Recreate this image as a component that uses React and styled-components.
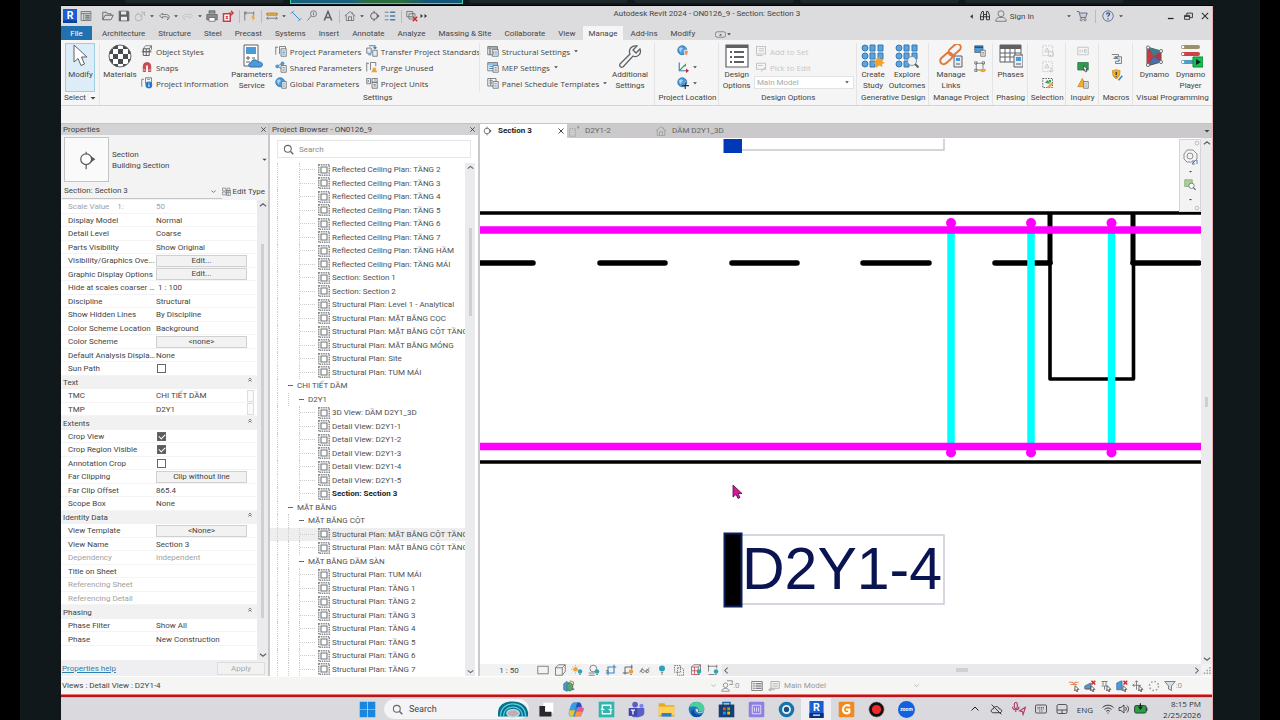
import React from 'react';
import styled, { createGlobalStyle, css } from 'styled-components';

const GlobalStyle = createGlobalStyle`
  * { box-sizing: border-box; }
  body {
    margin: 0;
    background: #000;
    color: #444;
    font-family: Roboto, 'Open Sans', 'Noto Sans', sans-serif;
    font-size: 8px;
    line-height: 11px;
  }
  button, input, select {
    font: inherit;
    color: inherit;
    margin: 0;
    padding: 0;
    border: 0;
    background: none;
    border-radius: 0;
  }
`;

/* ---------- frame ---------- */

const Desktop = styled.div`
  display: flex;
  flex-direction: column;
  min-height: 100vh;
  margin: 0 20px;
  padding: 0 47px 0 41px;
  background: #11181b;
`;

const MeetingStrip = styled.div`
  display: flex;
  gap: 6px;
  height: 6px;
  padding: 0 89px 0 64px;
  border-bottom: 1px solid #000;
`;

const MeetingTile = styled.div`
  flex: 1;
  height: 4px;
  margin-top: -1px;
  border-radius: 0 0 3px 3px;
  background: #1d2629;
  ${({ $active }) => $active && css`
    flex: 0 0 173px;
    height: 5px;
    border: 1px solid #35d99a;
    border-radius: 0;
    background: linear-gradient(90deg, #17607c 0 35%, #2c6d3e 45% 65%, #14557a 80%);
  `}
`;

const Window = styled.div`
  display: flex;
  flex-direction: column;
  flex: 1;
  background: #f4f4f4;
  border-right: 1px solid #e9b4b4;
`;

const Svg = styled.svg`
  display: block;
  flex: none;
  width: ${({ $size }) => $size}px;
  height: ${({ $size }) => $size}px;
  fill: none;
  stroke: ${({ $color }) => $color || '#5d6165'};
`;

/* ---------- icon drawings, 16 x 16 ---------- */

const globe = (
  <>
    <circle cx="7" cy="7" r="6" fill="#4b9bd8" stroke="#2c6fae" />
    <path d="M3 4l3-1 2 2-2 2-1 3-2-3zM9 7l3-1v3l-2 2z" fill="#a9d4f2" stroke="none" />
  </>
);
const plug = <path d="M9.500 7.500l5 5h-2.500l1 2.500-1.500.5-1-2.500-1.500 1.500z" fill="#fff" stroke="#333" />;
const bulb = (x, y, c = '#2ba3b8') => (
  <>
    <circle cx={x} cy={y} r="3" fill={c} stroke="none" />
    <path d={`M${x - 1} ${y + 4}h2`} stroke="#555" />
  </>
);
const redX = <path d="M10 1l5 5M15 1l-5 5" stroke="#d3232e" strokeWidth="2" />;

const art = {
  revit: (
    <>
      <path d="M0 0h16v16H0z" fill="#1a5fd0" stroke="none" />
      <path d="M0 13h16v3H0z" fill="#0b3f9c" stroke="none" />
      <text x="8" y="11.500" textAnchor="middle" fontSize="12" fontWeight="700" fill="#fff" stroke="none">R</text>
    </>
  ),
  home: <><path d="M1.500 2h13v12h-13zM1.500 4.500h13M5 5v9" /><path d="M7 7h6M7 9.500h6M7 12h6" strokeWidth="1.500" /></>,
  open: <path d="M1 13V3h5l1 2h5v2M1 13l3-6h11l-3 6z" strokeWidth="1.200" />,
  save: <><path d="M1.500 1.500h12l1 1v12h-13z" fill="#5d6165" /><path d="M4 2h7v4H4zM4 9h8v5H4z" fill="#ececec" stroke="none" /></>,
  sync: <g stroke="#aaacae"><circle cx="6" cy="10" r="4.500" /><path d="M9 3h5v5M14 3l-6 6M3 6l3-3" /></g>,
  undo: <path d="M6 4L2 8l4 3V9h5c3 0 3 3 1 4 4-1 4-7-1-7H6z" />,
  redo: <path d="M10 4l4 4-4 3V9H5c-3 0-3 3-1 4-4-1-4-7 1-7h5z" stroke="#bfc1c3" />,
  print: <><path d="M4 5V1h8v4M4 13H1V6h14v7h-3" fill="#8a8d90" /><path d="M4 10h8v5H4z" fill="#fff" /></>,
  pdf: <><path d="M2 5h9v10H2z" fill="#fff" stroke="#c83b45" strokeWidth="2" /><path d="M9 4h5M12 1l3 3-3 3M5 8l3 4M8 8l-3 4" stroke="#c83b45" strokeWidth="1.500" /></>,
  dims: <><path d="M1 2v12M13 2v5M1 4h12M3 2L1 4l2 2" /><path d="M11 7h3l-1 3h2l-4 5 1-4h-2z" fill="#f0a42c" stroke="none" /></>,
  measure: <><path d="M1 4h14v3H1z" fill="#e8b14c" stroke="#a87b26" /><path d="M1 11h14M3 9l-2 2 2 2M13 9l2 2-2 2" /></>,
  aligned: <path d="M3 3l10 10M1 5l4-4M11 15l4-4" stroke="#4287be" strokeWidth="1.300" />,
  tag: <><circle cx="10" cy="5" r="4" /><path d="M2 14l5-6M10 3v4" /></>,
  text: <path d="M3 14L8 2l5 12M5 10h6" strokeWidth="2" />,
  house: <><path d="M1 8l7-6 7 6M3 7v7h10V7" /><path d="M6 14V9h4v5M11 3v3" /></>,
  section: <><circle cx="8" cy="8" r="4.500" strokeWidth="1.300" /><path d="M8 1v3M8 12v3" strokeWidth="1.300" /><path d="M11 4l4.500 4-4.500 4c2-2 2-6 0-8z" fill="#5d6165" stroke="none" /></>,
  thin: <><path d="M1 3h5M1 8h5M1 13h5" /><path d="M8 3h7M8 8h7M8 13h7" strokeWidth="2.200" stroke="#4f7fae" /></>,
  closeViews: <><path d="M1 2h8v7H1zM4 5h8v7H4z" /><path d="M9 9l6 6M15 9l-6 6" stroke="#d3232e" strokeWidth="1.800" /></>,
  more: <path d="M1 4l5 4-5 4zM9 4l5 4-5 4z" fill="#333" stroke="none" />,
  caret: <path d="M3 6h10l-5 5z" fill="#444" stroke="none" />,
  caretLeft: <path d="M11 3v10L5 8z" fill="#333" stroke="none" />,
  binoculars: <path d="M2 13V7l2-5h2v11zM14 13V7l-2-5h-2v11zM6 6h4v3H6zM2 9h4M10 9h4" strokeWidth="1.300" stroke="#333" />,
  user: <><circle cx="8" cy="5" r="4" /><path d="M1 15c0-4 3-5 5-5h4c2 0 5 1 5 5z" /></>,
  cart: <><path d="M1 2h3l2 8h7l2-6H5" fill="#c9ccd4" stroke="#4a5470" /><circle cx="7" cy="13" r="1.500" /><circle cx="12" cy="13" r="1.500" /></>,
  help: <><circle cx="8" cy="8" r="7" stroke="#40537a" /><path d="M6 6c0-3 5-3 4 0-.5 1-2 1.500-2 3M8 11v1.500" stroke="#2350a8" strokeWidth="1.700" /></>,
  min: <path d="M3 12h9" stroke="#222" strokeWidth="2" />,
  restore: <path d="M1 6h9v7H1zM5 6V2h10v8h-5M1 8h9" stroke="#222" strokeWidth="1.500" />,
  close: <path d="M3 3l10 10M13 3L3 13" stroke="#333" strokeWidth="1.800" />,
  pill: <><rect x="0.500" y="4" width="15" height="8" rx="3" /><path d="M6 9.500h4L8 7z" fill="#444" stroke="none" /></>,
  objectStyles: <><path d="M3 5l3-4h8v5l-3 3H3z" /><path d="M3 5h8v9H3zM7 5v9M1 9h13M11 5l3-4" strokeWidth="1.300" /></>,
  snaps: <><path d="M3 14V7a5 5 0 0110 0v7h-3V7a2 2 0 00-4 0v7z" fill="#d84a55" stroke="#b3323d" /><path d="M3 12h3M10 12h3" stroke="#fff" /></>,
  projectInfo: <><path d="M1 3v10M1 3h3M6 1h8v8M6 1v8M8 3h4" /><circle cx="10.500" cy="10.500" r="4.500" fill="#2775c4" stroke="none" /><path d="M10.500 10v3M10.500 7.500v1" stroke="#fff" strokeWidth="1.500" /></>,
  projectParams: <><path d="M1 2v11M1 3h3M6 2h8v3M6 2v10" /><path d="M8 5h7v10H8z" fill="#e9edf1" /><path d="M10 8h3M10 10h3M10 12h3" stroke="#3a84c4" /></>,
  sharedParams: <><path d="M3 7l7-4M3 7l7 4" /><circle cx="3" cy="7" r="2.500" fill="#4b9bd8" stroke="none" /><circle cx="10" cy="3" r="2.500" fill="#4b9bd8" stroke="none" /><path d="M8 6h7v9H8z" fill="#e9edf1" /><path d="M10 9h3M10 12h3" /></>,
  globalParams: <>{globe}<path d="M9 6h6v9H9z" fill="#e9edf1" /><path d="M11 9h2M11 12h2" /></>,
  transfer: <><path d="M1 4h6v7H1zM9 7h6v8H9z" fill="#e9edf1" /><path d="M4 1h8v4M10 3l2 2 2-2M3 13h4" stroke="#3a84c4" strokeWidth="1.500" /></>,
  purge: <><path d="M1 2v12M1 3h3M6 2h7v5M6 2v10" /><path d="M9 9h4v2l2 4H7l2-4z" fill="#eda13a" stroke="none" /></>,
  units: <><path d="M1 2h5v7H1zM8 2h7v5H8zM8 7h7v8H8z" fill="#e9edf1" /><path d="M10 10h3M10 12h3M3 4v3M11 4h2" /></>,
  structural: <><path d="M1 2h13v11H1z" /><path d="M1 4h13M4 5v8" strokeWidth="1.500" /><path d="M7 6h8v9H7z" fill="#e9edf1" /><path d="M9 8v5M12 8v5" stroke="#3a84c4" /></>,
  mep: <><path d="M1 2h13v11H1z" /><path d="M1 4h13M3 7h5M3 10h5" stroke="#3a84c4" strokeWidth="1.500" /><path d="M8 6h7v9H8z" fill="#e9edf1" /><path d="M10 9h3M10 12h3" /></>,
  panelSchedule: <><path d="M1 2h11v10H1zM3 5h5M3 8h4M5 2v10" /><path d="M8 6h7v9H8z" fill="#e9edf1" /><path d="M10 9h3M10 12h3" stroke="#3a84c4" /></>,
  location: <>{globe}<path d="M12 7c4 0 4 3 0 8-3-5-3-8 0-8z" fill="#ec8f62" stroke="#fff" /></>,
  coords: <><path d="M3 2v11h10" stroke="#3b7cbf" strokeWidth="1.500" /><path d="M4 12l6-6" stroke="#3aa457" strokeWidth="1.500" /><path d="M12 10l4 3-4 3z" fill="#d3232e" stroke="none" /><path d="M12 3v4H8z" fill="#3aa457" stroke="none" /></>,
  position: <>{globe}<path d="M11 7v9M7 11.500h9" stroke="#333" strokeWidth="1.600" /></>,
  addSet: <g stroke="#c3c5c7"><path d="M2 2h12v10H2zM5 5h7M5 8h7M2 14h8" strokeWidth="1.400" /></g>,
  pickEdit: <g stroke="#c3c5c7"><path d="M2 3h12v8H2zM4 6h6M8 14l6-6" strokeWidth="1.400" /></g>,
  projectA: <><path d="M1 1h11v9H1z" fill="#4b9bd8" /><path d="M1 3h11" stroke="#24527d" strokeWidth="2" /><path d="M9 7h6v8H9z" fill="#e9edf1" /><path d="M11 10h2M11 12h2" /></>,
  decal: <><path d="M3 3h9v9H3zM1 1h3v3H1zM11 1h3v3h-3zM1 11h3v3H1z" /><path d="M8 11a4 3 0 107-1l-3 2z" fill="#eda13a" stroke="none" /></>,
  selSave: <g stroke="#bcbec0"><path d="M1 1h13v13H1z" strokeDasharray="2 1.500" /><path d="M4 9l3-5 2 5zM9 9h6v6H9z" /></g>,
  selLoad: <g stroke="#bcbec0"><path d="M1 1h13v13H1z" strokeDasharray="2 1.500" /><path d="M4 9l3-5 2 5zM12 8v6M9 12l3 3 3-3" /></g>,
  selEdit: <><path d="M1 2h13v12H1z" strokeDasharray="2 1.500" stroke="#333" /><path d="M4 8l3-4 4 5zM9 4h3v3H9z" fill="#34a15a" stroke="none" /><path d="M8 14l6-6" stroke="#eda13a" strokeWidth="3" /></>,
  ids: <g stroke="#c3c5c7"><path d="M1 3h14v10H1zM4 6v4M7 6v4M10 6h2v4h-2z" strokeWidth="1.300" /></g>,
  idSelect: <><path d="M1 2h14v10H1z" fill="#2f9b52" stroke="#23763e" /><path d="M9 6l5 5h-2l1 3-2 .5-1-3-1 1z" fill="#fff" stroke="#333" /></>,
  warnings: <><path d="M7 2l6 11H1z" fill="#efb02e" stroke="#c48a14" /><path d="M9 6h6v9H9z" fill="#e9edf1" /><path d="M11 9h2M11 12h2" /></>,
  macro: <><path d="M1 2h9v3H5l5 2H4M3 7h7" /><path d="M8 5h6v9H6v-3h5" fill="#e9edf1" /><path d="M9 8h3M9 10h3" stroke="#3a84c4" /></>,
  macroSec: <><path d="M2 2c3 0 4-1 5-1s2 1 5 1c0 6-1 9-5 11C3 11 2 8 2 2z" fill="#f0ae2a" stroke="#c48a14" /><path d="M7 4v4M7 9.500V11" stroke="#333" strokeWidth="1.600" /><path d="M10 15l5-6" stroke="#3a84c4" strokeWidth="2" /></>,
  editType: <><path d="M1 2h6v5H1zM9 2h5v5H9zM1 9h6v5H1z" /><path d="M8 6h7v9H8zM8 10h7M11 6v9" /></>,
  search: <><circle cx="7" cy="7" r="5" stroke="#666" strokeWidth="1.500" /><path d="M11 11l4 4" stroke="#666" strokeWidth="2" /></>,
  chevUp: <path d="M3 10l5-4 5 4" strokeWidth="1.800" />,
  chevDown: <path d="M3 6l5 4 5-4" strokeWidth="1.800" />,
  chevLeft: <path d="M10 3L5 8l5 5" strokeWidth="1.800" />,
  chevRight: <path d="M6 3l5 5-5 5" strokeWidth="1.800" />,
  collapse: <path d="M4 7l4-4 4 4M4 12l4-4 4 4" stroke="#333" strokeWidth="1.800" />,
  sheet: <><path d="M1 1h14v14H1z" strokeWidth="2" stroke="#8a8d90" strokeDasharray="2 1" /><path d="M4 4h8v8H4z" stroke="#6d7073" fill="#fff" strokeWidth="1.400" /></>,
  detailView: <><path d="M2 5h8v10H2z" strokeDasharray="2 1" stroke="#999" /><path d="M12 3h3M13.500 1v4" stroke="#888" /></>,
  box: <path d="M1 3h14v10H1z" />,
  cube: <path d="M2 5h9v10H2zM2 5l4-4h9v9l-4 5M11 5l4-4" />,
  sun: <><circle cx="6" cy="7" r="3" fill="#eda13a" stroke="none" /><path d="M6 1v2M6 11v2M0 7h2M2 3l1 1M10 3L9 4M2 11l1-1" stroke="#eda13a" />{bulb(12, 10)}</>,
  shadow: <><circle cx="7" cy="6" r="4.500" /><path d="M1 12h8M1 15h8" />{bulb(12, 10)}</>,
  cropA: <><path d="M4 15V4h11M1 12h11V1" stroke="#3a84c4" strokeWidth="1.500" /><path d="M1 9h3v3" /></>,
  cropB: <><path d="M4 14V4h10M1 12h8M13 1v6" strokeWidth="1.300" />{bulb(12, 10, '#eda13a')}</>,
  glasses: <path d="M1 11l4-6M9 11l5-6M3 9a2 2 0 104 1 2 2 0 00-4-1M9 9a2 2 0 104 1 2 2 0 00-4-1" />,
  reveal: <><circle cx="8" cy="6" r="4" fill="#2ba3b8" stroke="none" /><path d="M6.500 11.500h3M7 13.500h2" stroke="#555" /></>,
  tempProps: <><path d="M2 2h8v9H2z" strokeDasharray="2 1" /><path d="M6 5h6l2 2v8H6z" strokeDasharray="2 1" /></>,
  analytic: <><path d="M2 4l3-3h9v9M11 4l3-3" /><path d="M2 4h9v10H2zM2 9h9M6 4v10" stroke="#b44a4a" />{bulb(12, 10)}</>,
  constraint: <><path d="M2 1v9M1 3h12M13 1v5M2 14h8" />{bulb(12, 10)}</>,
  worksets: <><path d="M1 5l4-3 4 3v8l-4 2-4-2z" fill="#4b9bd8" stroke="#2c6fae" /><path d="M5 6l4-3 4 3v6l-4 3-4-3z" fill="#5da271" stroke="#3d7c4d" /><path d="M9 1l5 2v4" stroke="#d98a2b" strokeWidth="1.500" /><path d="M11 13l4-1" stroke="#3a84c4" strokeWidth="2" /></>,
  people: <g stroke="#777"><circle cx="6" cy="7" r="3" /><path d="M1 15c0-5 10-5 10 0zM8 1h7v5h-4" /></g>,
  list: <><path d="M1 2h14v12H1z" /><path d="M3 5h2M6 5h8M3 8h2M6 8h8M3 11h2M6 11h8" strokeWidth="1.400" /></>,
  listDim: <g stroke="#999"><path d="M4 2h11v9H4z" /><path d="M6 5h7M6 8h7M1 13h8M4 11l-3 2 3 2" /></g>,
  selLinks: <><path d="M1 3h5l2 2 2-2h4M3 6h9" stroke="#e28a54" strokeWidth="1.500" />{plug}</>,
  selUnderlay: <><path d="M1 8l8-4v8H1zM3 12h6" fill="#4b9bd8" />{redX}{plug}</>,
  selPinned: <><path d="M2 2h8M4 2v5M8 2v5M2 8h8M6 8v5" />{plug}</>,
  selFace: <><path d="M1 4l7-3v12H1z" fill="#4b9bd8" stroke="#2c6fae" />{redX}{plug}</>,
  dragSel: <><path d="M6 1v12M1 7h11M4 3l2-2 2 2M3 5L1 7l2 2" />{plug}</>,
  busy: <circle cx="8" cy="8" r="6" strokeDasharray="2 2.700" stroke="#999" strokeWidth="2" />,
  filter: <path d="M1 2h14l-5 6v6l-4-2V8z" fill="#dadcde" />,
  wheel: <><path d="M2 5l3-4h6l4 4v5l-3 3H5l-3-3z" stroke="#8b8f94" /><circle cx="8" cy="7" r="3" stroke="#8b8f94" /><path d="M10 12h3l-3 3h3M14 11h1v4" stroke="#5a78b5" /></>,
  zoomRegion: <><path d="M1 1h10v9H1z" fill="#a9cf9a" stroke="#7ba56d" /><circle cx="10" cy="9" r="3.500" fill="#fff" /><path d="M12.500 11.500l3 3" strokeWidth="1.500" /></>,
  ring: <circle cx="8" cy="8" r="5" strokeWidth="1.500" stroke="#999" />,
  grip: <path d="M12 4h2M8 8h2M12 8h2M4 12h2M8 12h2M12 12h2" strokeWidth="2" stroke="#999" />,
};

const big = {
  modify: <path d="M6 1v17l4-3.500 3 7 3.500-1.500-3-7h5.500z" fill="#fff" />,
  materials: (
    <>
      <clipPath id="ball"><circle cx="12" cy="12" r="11" /></clipPath>
      <g clipPath="url(#ball)" stroke="none">
        <path d="M0 0h24v24H0z" fill="#fff" />
        <path d="M5 0h5v5H5zM15 0h5v5h-5zM0 5h5v5H0zM10 5h5v5h-5zM20 5h4v5h-4zM5 10h5v5H5zM15 10h5v5h-5zM0 15h5v5H0zM10 15h5v5h-5zM20 15h4v5h-4zM5 20h5v4H5zM15 20h5v4h-5z" fill="#4a4d50" />
      </g>
      <circle cx="12" cy="12" r="11" />
    </>
  ),
  service: <><path d="M4 1h14v21H4z" fill="#fff" /><path d="M6 3h10v7H6z" fill="#4b9bd8" stroke="none" /><path d="M6 14h4M8 12v4M12 14h3M6 18h4" /><path d="M11 23c-3 0-3-4 0-4 0-4 6-4 7-1 5-1 6 5 2 5z" fill="#4b9bd8" stroke="#2c6fae" /></>,
  wrench: <path d="M2 20L12 10C10 5 14 1 19 2l-4 4 3 3 4-4c2 5-3 9-7 7L5 23c-2 1-4-1-3-3z" strokeWidth="1.300" />,
  options: <><path d="M1 1h22v22H1z" fill="#fff" strokeWidth="1.200" /><path d="M1 2.500h22" strokeWidth="3" /><path d="M9 8h10M9 13h10M9 18h10M5 8h2M5 13h2M5 18h2" strokeWidth="2" /></>,
  study: (
    <>
      <g fill="#5ba4dc" stroke="#3379b5">
        <circle cx="4" cy="4" r="3" /><path d="M9 1h5v6H9zM17 1h5v6h-5z" />
        <circle cx="4" cy="12" r="3" /><path d="M9 9h5v6H9zM17 9h5v6h-5z" />
        <circle cx="4" cy="20" r="3" /><path d="M9 17h5v6H9z" />
      </g>
      <path d="M18 12l1.500 3.500L23 14l-1.500 3.500L24 19l-3 1 .5 3-3.500-1.500L15 24v-3.500L12 19l3-1.500L14 14l3 1.500z" fill="#f2a12c" stroke="none" />
    </>
  ),
  explore: (
    <>
      <g fill="#5ba4dc" stroke="#3379b5">
        <circle cx="4" cy="4" r="3" /><path d="M9 1h5v6H9zM17 1h5v6h-5z" />
        <circle cx="4" cy="12" r="3" /><path d="M9 9h5v6H9zM17 9h5v6h-5z" />
        <circle cx="4" cy="20" r="3" /><path d="M9 17h5v6H9z" />
      </g>
      <circle cx="17" cy="17" r="4.500" fill="#eef3f7" stroke="#8b9096" /><path d="M20 20l3.500 3.500" strokeWidth="2" />
    </>
  ),
  links: <><g stroke="#e2793c" strokeWidth="2"><rect x="9" y="2" width="14" height="7" rx="3.500" transform="rotate(-42 16 6)" /><rect x="0" y="11" width="14" height="7" rx="3.500" transform="rotate(-42 7 14)" /></g><path d="M15 12h8v11h-8z" fill="#e9edf1" /><path d="M17 14h4v3h-4z" fill="#4b9bd8" stroke="none" /><path d="M17 20h4" /></>,
  phases: <><path d="M1 1h21v17H1z" fill="#fff" /><path d="M1 3h21" strokeWidth="4" /><path d="M1 9h21M1 13h21M6 4v14M11 4v14M16 4v14" /><path d="M15 11h9v12h-9z" fill="#e9edf1" /><path d="M17 13h5v4h-5z" fill="#4b9bd8" stroke="none" /><path d="M17 20h5" /></>,
  dynamo: <><path d="M5 3l14 4v11L5 22z" fill="#4d3f57" stroke="#555" /><path d="M5 3l7 9-7 10z" fill="#c9373f" stroke="none" /><path d="M6 3l13 4-7 6z" fill="#3b7f8c" stroke="none" /><path d="M6 21l13-3-7-6z" fill="#4a6fa8" stroke="none" /><path d="M19 7v11l-7-6z" fill="#a83a4a" stroke="none" /><g fill="#eee" stroke="#777"><circle cx="6" cy="3.500" r="1.600" /><circle cx="19" cy="7" r="1.600" /><circle cx="19" cy="18" r="1.600" /><circle cx="6" cy="21" r="1.600" /></g></>,
  player: <><g strokeWidth="4" strokeLinecap="round"><path d="M4 3h15" stroke="#98926b" /><path d="M4 10h15" stroke="#c8434a" /><path d="M4 18h12" stroke="#4d9fc0" /></g><g fill="#fff" stroke="none"><circle cx="4" cy="3" r="1.300" /><circle cx="4" cy="10" r="1.300" /><circle cx="4" cy="18" r="1.300" /></g><path d="M14 13h10v10H14z" fill="#16c24c" stroke="#0d8a34" /><path d="M17 15v6l5-3z" fill="#123" stroke="none" /></>,
  sectionType: <><circle cx="11" cy="11" r="6.500" fill="#fff" strokeWidth="1.500" /><path d="M11 2v3M11 17v6" strokeWidth="1.500" /><path d="M12 4l10 7-10 7c7-3 7-11 0-14z" fill="#555" stroke="none" /></>,
};

const task = {
  start: <path d="M1 1h10.500v10.500H1zM12.500 1H23v10.500H12.500zM1 12.500h10.500V23H1zM12.500 12.500H23V23H12.500z" fill="#1a86dc" stroke="none" />,
  taskView: <><path d="M7 2h15v15H7z" fill="#fff" stroke="#ddd" /><path d="M2 7h8v8h9v7H2z" fill="#26282b" stroke="none" /></>,
  copilot: <><path d="M8 2h8l-5 20H5c-4 0-5-4-3-9z" fill="#2b8de0" stroke="none" /><path d="M8 2h5l-4 11H2c1-5 3-11 6-11z" fill="#3a9be8" stroke="none" /><path d="M2 13h8l-3 9H5c-4 0-4-5-3-9z" fill="#e8c43a" stroke="none" /><path d="M13 2h3c3 0 3 5 4 7h-9z" fill="#2b4fb8" stroke="none" /><path d="M14 9h6c3 0 3 3 1 6l-3 7H9z" fill="#e0589a" stroke="none" /><path d="M12 15h8c-1 4-3 7-6 7H9z" fill="#f19a3e" stroke="none" /></>,
  share: <><path d="M1 1h22v22H1z" fill="#2fb7ad" stroke="none" /><path d="M6 11V6h12v4M18 13v5H6v-4M9 12H4M15 12h5" stroke="#fff" strokeWidth="1.800" /></>,
  teams: <><circle cx="10" cy="5" r="4" fill="#5a5fc7" stroke="none" /><circle cx="19" cy="7" r="3" fill="#7b83eb" stroke="none" /><path d="M4 10h19v8c-2 5-6 3-8 5H9c-4 0-5-4-5-6z" fill="#5a5fc7" stroke="none" /><path d="M1 10h12v11H1z" fill="#3f44a8" stroke="none" /><path d="M4 13h6M7 13v6" stroke="#fff" strokeWidth="1.800" /></>,
  folder: <><path d="M1 3h8l2 3h12v16H1z" fill="#e9a825" stroke="none" /><path d="M1 8h22v12H1z" fill="#fdd25a" stroke="none" /><path d="M5 17h14v5H5z" fill="#2b7fcf" stroke="none" /></>,
  edge: <><circle cx="12" cy="12" r="11" fill="#1b77c9" stroke="none" /><path d="M2 9C5-2 23-1 23 11c0 4-6 5-8 3 2-5-7-8-13-5z" fill="#4ccf9a" stroke="none" /><path d="M9 12c-2 6 5 9 11 7-3 4-9 5-13 2-4-4-2-9 2-9z" fill="#0d4f97" stroke="none" /><path d="M11 11c3-1 4 2 3 4 2 2 6 1 9-2-1 3-5 5-8 4s-5-4-4-6z" fill="#d9d9de" stroke="none" /></>,
  store: <><path d="M7 6V2h10v4" stroke="#1d63b0" strokeWidth="2" /><path d="M1 5h22v18H1z" fill="#163f73" stroke="none" /><path d="M7 9h4v4H7z" fill="#f25022" stroke="none" /><path d="M13 9h4v4h-4z" fill="#7fba00" stroke="none" /><path d="M7 15h4v4H7z" fill="#00a4ef" stroke="none" /><path d="M13 15h4v4h-4z" fill="#ffb900" stroke="none" /></>,
  purple: <><rect x="1" y="1" width="22" height="22" rx="2" fill="#8f7fe0" stroke="none" /><path d="M6 6h12v12H6zM9 9v6M12 9v6M15 9v6" stroke="#e6e1ff" strokeWidth="1.300" /></>,
  camera: <><circle cx="12" cy="12" r="11" fill="#1873ad" stroke="none" /><circle cx="12" cy="12" r="5" fill="#1d4f7c" stroke="#eaf4fb" strokeWidth="2.500" /></>,
  revitApp: <><path d="M2 0h20v24H2z" fill="#1a5fd0" stroke="none" /><path d="M2 17h20v7H2z" fill="#0b2f7c" stroke="none" /><text x="12" y="14" textAnchor="middle" fontSize="15" fontWeight="700" fill="#fff" stroke="none">R</text><path d="M7 20h10" stroke="#cfe0ff" strokeWidth="2" /></>,
  foxit: <><rect x="1" y="1" width="22" height="22" rx="2" fill="#f08a1c" stroke="none" /><path d="M17 7c-5-3-10 0-10 5s5 7 9 4v-4h-5" stroke="#fff" strokeWidth="3" /></>,
  record: <><circle cx="12" cy="12" r="11" fill="#111" stroke="#e6c3c3" /><circle cx="12" cy="12" r="6.500" fill="#f02a2a" stroke="none" /></>,
  zoom: <><circle cx="12" cy="12" r="12" fill="#1360e0" stroke="none" /><text x="12" y="14.500" textAnchor="middle" fontSize="7" fontWeight="700" fill="#fff" stroke="none">zoom</text></>,
  shell: <><path d="M0 24C-2 8 8 0 24 0s26 10 24 24z" fill="#0b6f8c" stroke="none" /><g stroke="#52d3e2" strokeWidth="2"><path d="M4 24C4 10 14 4 24 4s20 6 20 20" /><path d="M9 24C9 13 17 9 24 9s15 4 15 15" /></g><ellipse cx="24" cy="19" rx="10" ry="6" fill="#c9a9b0" stroke="#a7e6ee" strokeWidth="2" /></>,
  up: <path d="M5 15l7-7 7 7" strokeWidth="2" stroke="#222" />,
  cloudOff: <path d="M6 18c-5 0-5-7 0-7 1-6 10-6 11 0 6 0 6 7 1 7zM3 3l18 18" strokeWidth="1.800" stroke="#333" />,
  micLoc: <g stroke="#b0325c" strokeWidth="1.800"><rect x="4" y="1" width="5" height="10" rx="2.500" /><path d="M1 8c0 7 11 7 11 0M6.500 13v4M23 9l-10 6 5 1.500 1 5z" /></g>,
  keyboard: <g stroke="#333" strokeWidth="1.600"><rect x="1" y="4" width="22" height="16" rx="2" /><path d="M5 9h14M5 12h14M8 16h8" strokeDasharray="2 1.500" /></g>,
  touchpad: <g stroke="#333" strokeWidth="1.600"><rect x="2" y="3" width="20" height="18" rx="3" /><path d="M2 14h20M12 14v7" /></g>,
  wifi: <path d="M1 9c6-6 16-6 22 0M5 13c4-4 10-4 14 0M8.500 16.500c2-2 5-2 7 0M11 20h2" stroke="#333" strokeWidth="2" />,
  volume: <path d="M2 9h4l6-5v16l-6-5H2zM15 8c2 2 2 6 0 8M18 5c4 4 4 10 0 14" stroke="#333" strokeWidth="1.700" />,
  battery: <><rect x="1" y="6" width="20" height="13" rx="3" fill="#2e9e3f" stroke="#234" strokeWidth="1.500" /><path d="M22 10v5" stroke="#234" strokeWidth="2" /><path d="M11 2v9M8 8l3 4 3-4" stroke="#122" strokeWidth="2" /></>,
};

const Icon = ({ name, size = 12, color }) => (
  <Svg viewBox="0 0 16 16" $size={size} $color={color} aria-hidden="true">{art[name]}</Svg>
);
const BigIcon = ({ name, size = 24 }) => (
  <Svg viewBox="0 0 24 24" $size={size} aria-hidden="true">{big[name]}</Svg>
);
const TaskIcon = ({ name, size = 17 }) => (
  <Svg viewBox="0 0 24 24" $size={size} aria-hidden="true">{task[name]}</Svg>
);

/* ---------- title bar and tabs ---------- */

const TitleBar = styled.header`
  display: grid;
  grid-template-columns: auto 1fr auto;
  height: 20px;
  background: #dcdcde;
`;

const QuickAccess = styled.div`
  display: flex;
  align-items: center;
  padding-left: 1px;
`;

const ToolButton = styled.button`
  display: flex;
  align-items: center;
  justify-content: center;
  width: ${({ $w }) => $w || 16}px;
  height: 16px;
`;

const Divider = styled.span`
  width: 6px;
  height: 13px;
  background: ${({ $clear }) => ($clear ? 'none' : 'linear-gradient(#bbb, #bbb) center / 1px 100% no-repeat')};
`;

const WindowTitle = styled.h1`
  margin: 0;
  padding: 2px 0 0 18px;
  font-size: 8px;
  font-weight: 400;
  text-align: center;
`;

const TitleTools = styled.div`
  display: flex;
  align-items: center;
  gap: 2px;
`;

const SignIn = styled.button`
  display: flex;
  align-items: center;
  gap: 3px;
  margin-right: 30px;
`;

const WindowButtons = styled.div`
  display: flex;
  gap: 3px;
  margin-left: 38px;
`;

const Tabs = styled.nav`
  display: flex;
  align-items: stretch;
  gap: 1px;
  height: 14px;
  background: #dcdcde;
`;

const TabButton = styled.button`
  padding: 0 6px;
  white-space: nowrap;
  ${({ $kind }) => $kind === 'file' && css`
    width: 31px;
    margin-right: 3px;
    background: #2271ae;
    color: #fff;
  `}
  ${({ $kind }) => $kind === 'active' && css`
    background: #f5f5f5;
  `}
`;

/* ---------- ribbon ---------- */

const Ribbon = styled.section`
  display: flex;
  height: 66px;
  padding-top: 3px;
  background: #f5f5f5;
  border-bottom: 1px solid #d5d5d5;
`;

const RibbonPanel = styled.div`
  display: flex;
  flex-direction: column;
  flex: ${({ $share }) => $share} 1 0;
  min-width: 0;
  & + & { box-shadow: -1px 0 #e4e4e4; }
`;

const PanelBody = styled.div`
  display: flex;
  flex: 1;
  justify-content: space-evenly;
`;

const PanelLabel = styled.div`
  display: flex;
  align-items: center;
  justify-content: center;
  gap: 3px;
  height: 13px;
  padding-bottom: 2px;
  white-space: nowrap;
`;

const Stack = styled.div`
  display: flex;
  flex-direction: column;
  ${({ $share }) => $share && css`flex: ${$share} 1 0;`}
  min-width: 0;
  ${({ $line }) => $line && css`
    box-shadow: -1px 0 #e4e4e4;
    & > button { padding-left: 7px; }
  `}
  ${({ $center }) => $center && css`justify-content: center; padding-bottom: 2px;`}
`;

const SmallButton = styled.button`
  display: flex;
  align-items: center;
  gap: 3px;
  height: 16px;
  padding-left: 1px;
  font-family: 'Open Sans', 'Noto Sans', sans-serif;
  white-space: nowrap;
  &:disabled { color: #c6c6c6; }
`;

const LargeButton = styled.button`
  display: flex;
  flex-direction: column;
  align-items: center;
  gap: 1px;
  padding-top: 1px;
  height: 49px;
  line-height: 11px;
  ${({ $share }) => $share && css`flex: ${$share} 1 0;`}
  min-width: 0;
  white-space: pre-line;
  ${({ $pressed }) => $pressed && css`
    width: 30px;
    background: #dcedf7;
    box-shadow: inset 0 0 0 1px #9fcbe3;
  `}
`;

const OptionSelect = styled.select`
  appearance: none;
  width: 100px;
  height: 13px;
  padding: 0 2px;
  margin-top: 1px;
  background: #fff;
  border: 1px solid #e2e2e2;
  color: #aaa;
  opacity: 1;
`;

const SelectWrap = styled.span`
  display: flex;
  align-items: center;
  & > svg { margin: 0 4px 0 -10px; pointer-events: none; }
`;

const OptionsBar = styled.div`
  height: 18px;
  background: #f4f4f4;
  border-bottom: 1px solid #c4c4c6;
`;

/* ---------- docked panels ---------- */

const Workspace = styled.main`
  display: grid;
  grid-template-columns: 209px 210px 1fr;
  flex: 1;
  min-height: 0;
`;

const Dock = styled.section`
  display: flex;
  flex-direction: column;
  min-width: 0;
  background: ${({ $bg }) => $bg || '#fff'};
  border-right: 2px solid #c9c9cb;
`;

const DockHeader = styled.div`
  display: flex;
  align-items: center;
  justify-content: space-between;
  height: 11px;
  padding-left: 2px;
  background: #d3d3d5;
`;

const TypePicker = styled.button`
  display: flex;
  align-items: center;
  gap: 3px;
  height: 47px;
  padding: 2px 0 0 3px;
  text-align: left;
  & > span { flex: 1; }
`;

const TypeThumb = styled.div`
  display: flex;
  align-items: center;
  justify-content: center;
  width: 45px;
  height: 45px;
  border: 1px solid #c4c4c4;
  background: #fafafa;
`;

const InstanceRow = styled.div`
  display: flex;
  align-items: center;
  height: 18px;
  padding-left: 1px;
`;

const InstanceSelect = styled.select`
  appearance: none;
  flex: 1;
  height: 16px;
  padding-left: 2px;
  border-bottom: 1px solid #c4c4c4;
`;

const Chevron = styled.span`
  margin: 0 5px 0 -12px;
  pointer-events: none;
`;

const EditTypeButton = styled.button`
  display: flex;
  align-items: center;
  gap: 2px;
  padding-right: 3px;
  white-space: nowrap;
`;

const PropsArea = styled.div`
  display: flex;
  flex: 1;
  align-items: flex-start;
  background: #fff;
`;

const PropTable = styled.table`
  flex: 1;
  width: 100%;
  height: 446px;
  table-layout: fixed;
  border-collapse: collapse;
  td, th {
    height: 13px;
    padding: 0;
    font-weight: 400;
    text-align: left;
    white-space: pre;
    line-height: 11px;
  }
`;

const GroupRow = styled.tr`
  background: #f1f1f1;
  && th { padding: 1px 4px 0 2px; }
  svg { float: right; }
`;

const PropRow = styled.tr`
  color: ${({ $dim }) => ($dim ? '#a2a2a2' : '#444')};
  box-shadow: inset 0 -1px #f4f4f4;
  && th {
    padding-left: 7px;
    overflow: hidden;
    text-overflow: ellipsis;
  }
  && td:nth-child(2) { padding-left: 1px; }
`;

const CellButton = styled.button`
  display: block;
  width: 91px;
  height: 12px;
  background: #f2f2f2;
  border: 1px solid #d0d0d0;
  line-height: 10px;
`;

const MiniButton = styled.button`
  display: block;
  width: 7px;
  height: 12px;
  background: #fafafa;
  border: 1px solid #ddd;
`;

const Check = styled.input`
  appearance: none;
  display: block;
  width: 9px;
  height: 9px;
  margin: 0 0 0 1px;
  border: 1px solid #666;
  background: #fff;
  &:checked {
    background: #5c5c5c;
  }
  &:checked::before {
    content: '';
    display: block;
    width: 5px;
    height: 3px;
    margin: 1px;
    border: solid #fff;
    border-width: 0 0 1px 1px;
    transform: rotate(-45deg);
  }
`;

const ScrollBar = styled.div`
  display: flex;
  flex-direction: column;
  align-items: center;
  justify-content: space-between;
  align-self: stretch;
  width: ${({ $w }) => $w || 11}px;
  background: #ebebed;
`;

const ScrollTrack = styled.div`
  flex: 1;
  width: 100%;
  padding-top: ${({ $from }) => $from}px;
  &::before {
    content: '';
    display: block;
    width: 3px;
    height: ${({ $len }) => $len};
    margin: 0 auto;
    background: #cfcfd3;
  }
`;

const DockFooter = styled.div`
  display: flex;
  align-items: center;
  justify-content: space-between;
  height: 16px;
  padding: 0 3px 0 1px;
  background: #efeff1;
  a { color: #2f7fae; }
`;

const ApplyButton = styled.button`
  width: 48px;
  height: 13px;
  border: 1px solid #dcdcdc;
  background: #f2f2f2;
  &:disabled { color: #aaa; }
`;

/* ---------- project browser ---------- */

const SearchBox = styled.label`
  display: flex;
  align-items: center;
  gap: 5px;
  height: 18px;
  margin: 5px 7px 5px;
  padding: 0 5px;
  border: 1px solid #e6e6e6;
  input { flex: 1; min-width: 0; outline: none; }
  input::placeholder { color: #8b8b8b; }
`;

const TreeArea = styled.div`
  display: flex;
  flex: 1;
  margin-right: 3px;
`;

const Tree = styled.ul`
  display: flex;
  flex-direction: column;
  flex: 1;
  min-width: 0;
  margin: 0;
  padding: 0;
  list-style: none;
`;

const TreeRow = styled.li`
  display: flex;
  align-items: center;
  flex: 1;
  padding-left: 7px;
  overflow: hidden;
  white-space: nowrap;
  font-weight: ${({ $bold }) => ($bold ? 700 : 400)};
  color: ${({ $bold }) => ($bold ? '#222' : '#505050')};
  background: ${({ $hover }) => ($hover ? '#eeeeef' : 'none')};
`;

const Guide = styled.span`
  flex: none;
  align-self: stretch;
  width: ${({ $wide }) => ($wide ? 19 : 11)}px;
  border-left: 1px ${({ $on }) => ($on ? 'dotted #ccc' : 'solid transparent')};
  background: ${({ $wide }) =>
    $wide ? 'repeating-linear-gradient(90deg, #ccc 0 1px, transparent 1px 2px) 0 50% / 16px 1px no-repeat' : 'none'};
`;

const Toggle = styled.button`
  flex: none;
  width: 7px;
  height: 9px;
  background: linear-gradient(#666, #666) 0 center / 5px 1px no-repeat;
`;

const TreeLabel = styled.span`
  margin-left: 2px;
`;

/* ---------- drawing view ---------- */

const ViewColumn = styled.section`
  display: flex;
  flex-direction: column;
  min-width: 0;
`;

const ViewTabs = styled.div`
  display: flex;
  align-items: stretch;
  height: 14px;
  background: #cbc9cb;
`;

const ViewTab = styled.button`
  display: flex;
  align-items: center;
  gap: 5px;
  width: 87px;
  padding: 0 0 1px 1px;
  color: #666;
  ${({ $active }) => $active && css`
    gap: 6px;
    padding: 0 2px 1px;
    background: #fff;
    color: #222;
    font-weight: 700;
  `}
  span { flex: 1; text-align: left; white-space: nowrap; }
`;

const ViewTabsMenu = styled.button`
  margin-left: auto;
  padding-right: 1px;
`;

const ViewBody = styled.div`
  display: flex;
  flex: 1;
  min-height: 0;
`;

const Canvas = styled.div`
  position: relative;
  flex: 1;
  min-width: 0;
  background: #fff;
`;

const Drawing = styled.svg`
  position: absolute;
  inset: 0;
  width: 100%;
  height: 100%;
`;

const NavBar = styled.div`
  position: absolute;
  top: 1px;
  right: 0;
  display: flex;
  flex-direction: column;
  align-items: center;
  justify-content: space-between;
  width: 22px;
  height: 73px;
  background: #f3f3f3;
  border: 1px solid #d5d5d5;
`;

const NavCorner = styled.span`
  align-self: flex-end;
`;

const ViewControls = styled.div`
  display: flex;
  align-items: center;
  height: 12px;
  background: #f2f2f2;
`;

const ScaleButton = styled.button`
  width: 54px;
  padding-left: 4px;
`;

const HorizontalScroll = styled.div`
  display: flex;
  align-items: center;
  justify-content: space-between;
  flex: 1;
  height: 12px;
  margin-left: 1px;
  background: #e9e8ea;
`;

const Thumb = styled.span`
  width: 12px;
  height: 4px;
  background: #d0d0d2;
`;

/* ---------- status bar ---------- */

const StatusBar = styled.footer`
  display: flex;
  align-items: center;
  height: 18px;
  border-top: 1px solid #fff;
  background: #f5f5f3;
`;

const StatusText = styled.span`
  width: 502px;
  padding-left: 1px;
`;

const StatusField = styled.span`
  display: flex;
  align-items: center;
  justify-content: flex-end;
  width: ${({ $w }) => $w}px;
  color: #999;
  & > span { flex: 1; }
`;

const StatusTools = styled.div`
  display: flex;
  gap: 4px;
  margin-left: auto;
  padding-right: 30px;
`;

const RedLine = styled.div`
  height: 4px;
  background: linear-gradient(#e77 0 1px, #b5161a 1px 3px, #f0b0b0 3px);
`;

/* ---------- taskbar ---------- */

const Taskbar = styled.footer`
  display: grid;
  grid-template-columns: 1fr auto 1fr;
  height: 22px;
  background: #dadade;
`;

const TaskCenter = styled.div`
  display: flex;
  align-items: center;
  grid-column: 2;
`;

const TaskButton = styled.button`
  display: flex;
  align-items: center;
  justify-content: center;
  width: 30px;
  height: 22px;
  background: ${({ $open }) => ($open ? '#f0f0f3' : 'none')};
`;

const TaskSearch = styled.label`
  display: flex;
  align-items: center;
  gap: 6px;
  width: 145px;
  height: 20px;
  margin: 0 2px;
  padding: 0 1px 0 8px;
  border-radius: 10px;
  background: #f4f4f6;
  font-size: 9px;
  input { flex: 1; min-width: 0; }
  input::placeholder { color: #444; }
`;

const Shell = styled.svg`
  width: 30px;
  height: 17px;
  fill: none;
`;

const Tray = styled.div`
  display: flex;
  align-items: center;
  justify-content: flex-end;
  gap: ${({ $gap }) => $gap || 9}px;
  padding-right: ${({ $pad }) => $pad || 0}px;
  color: #333;
  font-family: 'Open Sans', 'Noto Sans', sans-serif;
`;

const Clock = styled.time`
  width: 44px;
  text-align: right;
  white-space: pre-line;
`;

/* ---------- data ---------- */

const quickTools = [
  'revit', 'home', ' ', 'open', 'save', 'sync', 'caret', 'undo', 'caret', 'redo', 'caret', 'print', 'pdf', '|',
  'dims', '|', 'measure', 'caret', 'aligned', 'tag', 'text', '|', 'house', 'caret', 'section', 'thin', '|',
  'closeViews', 'more',
];

const tabs = [
  'File', 'Architecture', 'Structure', 'Steel', 'Precast', 'Systems', 'Insert', 'Annotate', 'Analyze',
  'Massing & Site', 'Collaborate', 'View', 'Manage', 'Add-Ins', 'Modify',
];

const properties = [
  ['Scale Value    1:', '50', 'dim'],
  ['Display Model', 'Normal'],
  ['Detail Level', 'Coarse'],
  ['Parts Visibility', 'Show Original'],
  ['Visibility/Graphics Ove...', 'Edit...', 'button'],
  ['Graphic Display Options', 'Edit...', 'button'],
  ['Hide at scales coarser ...', ' 1 : 100'],
  ['Discipline', 'Structural'],
  ['Show Hidden Lines', 'By Discipline'],
  ['Color Scheme Location', 'Background'],
  ['Color Scheme', '<none>', 'button'],
  ['Default Analysis Displa...', 'None'],
  ['Sun Path', false, 'check'],
  ['Text'],
  ['TMC', 'CHI TIẾT DẦM', 'more'],
  ['TMP', 'D2Y1', 'more'],
  ['Extents'],
  ['Crop View', true, 'check'],
  ['Crop Region Visible', true, 'check'],
  ['Annotation Crop', false, 'check'],
  ['Far Clipping', 'Clip without line', 'button'],
  ['Far Clip Offset', '865.4'],
  ['Scope Box', 'None'],
  ['Identity Data'],
  ['View Template', '<None>', 'button'],
  ['View Name', 'Section 3'],
  ['Dependency', 'Independent', 'dim'],
  ['Title on Sheet', ''],
  ['Referencing Sheet', '', 'dim'],
  ['Referencing Detail', '', 'dim'],
  ['Phasing'],
  ['Phase Filter', 'Show All'],
  ['Phase', 'New Construction'],
];

const leaves = (guides, names) => names.map((name) => ({ name, guides }));

const tree = [
  ...leaves([1, 0], [
    'Reflected Ceiling Plan: TẦNG 2', 'Reflected Ceiling Plan: TẦNG 3', 'Reflected Ceiling Plan: TẦNG 4',
    'Reflected Ceiling Plan: TẦNG 5', 'Reflected Ceiling Plan: TẦNG 6', 'Reflected Ceiling Plan: TẦNG 7',
    'Reflected Ceiling Plan: TẦNG HẦM', 'Reflected Ceiling Plan: TẦNG MÁI', 'Section: Section 1',
    'Section: Section 2', 'Structural Plan: Level 1 - Analytical', 'Structural Plan: MẶT BẰNG CỌC',
    'Structural Plan: MẶT BẰNG CỘT TẦNG 1', 'Structural Plan: MẶT BẰNG MÓNG', 'Structural Plan: Site',
    'Structural Plan: TUM MÁI',
  ]),
  { name: 'CHI TIẾT DẦM', guides: [1], folder: true },
  { name: 'D2Y1', guides: [1, 1], folder: true },
  ...leaves([1, 0], [
    '3D View: DẦM D2Y1_3D', 'Detail View: D2Y1-1', 'Detail View: D2Y1-2', 'Detail View: D2Y1-3',
    'Detail View: D2Y1-4', 'Detail View: D2Y1-5',
  ]),
  { name: 'Section: Section 3', guides: [1, 0], bold: true },
  { name: 'MẶT BẰNG', guides: [1], folder: true },
  { name: 'MẶT BẰNG CỘT', guides: [1, 1], folder: true },
  { name: 'Structural Plan: MẶT BẰNG CỘT TẦNG 1', guides: [1, 1], hover: true },
  { name: 'Structural Plan: MẶT BẰNG CỘT TẦNG 2', guides: [1, 1] },
  { name: 'MẶT BẰNG DẦM SÀN', guides: [1, 1], folder: true },
  ...leaves([1, 1], [
    'Structural Plan: TUM MÁI', 'Structural Plan: TẦNG 1', 'Structural Plan: TẦNG 2', 'Structural Plan: TẦNG 3',
    'Structural Plan: TẦNG 4', 'Structural Plan: TẦNG 5', 'Structural Plan: TẦNG 6', 'Structural Plan: TẦNG 7',
  ]),
];

const viewTools = [
  'box', 'cube', 'sun', 'shadow', 'cropA', 'cropB', 'glasses', 'reveal', 'tempProps', 'analytic', 'constraint',
];
const selectTools = ['selLinks', 'selUnderlay', 'selPinned', 'selFace', 'dragSel', 'busy'];
const apps = [
  'taskView', 'copilot', 'share', 'teams', 'folder', 'edge', 'store', 'purple', 'camera', 'revitApp', 'foxit',
  'record', 'zoom',
];

/* ---------- parts ---------- */

const Small = ({ icon, label, menu, disabled }) => (
  <SmallButton disabled={disabled}>
    <Icon name={icon} />
    {label}
    {menu && <Icon name="caret" size={6} />}
  </SmallButton>
);

const Large = ({ icon, label, share, pressed }) => (
  <LargeButton $share={share} $pressed={pressed}>
    <BigIcon name={icon} />
    {label}
  </LargeButton>
);

const IconOnly = ({ icon, menu }) => (
  <SmallButton aria-label={icon}>
    <Icon name={icon} />
    {menu && <Icon name="caret" size={6} />}
  </SmallButton>
);

const Panel = ({ share, label, children, menu }) => (
  <RibbonPanel $share={share}>
    <PanelBody>{children}</PanelBody>
    <PanelLabel>{label}{menu && <Icon name="caret" size={8} />}</PanelLabel>
  </RibbonPanel>
);

const Header = () => (
  <>
    <TitleBar>
      <QuickAccess>
        {quickTools.map((name, i) => {
          if (name === '|' || name === ' ') return <Divider key={i} $clear={name === ' '} />;
          const narrow = name === 'caret' || name === 'more';
          return (
            <ToolButton key={i} aria-label={name} $w={narrow ? 8 : 16}>
              <Icon name={name} size={name === 'caret' ? 6 : name === 'revit' ? 14 : narrow ? 8 : 12} />
            </ToolButton>
          );
        })}
      </QuickAccess>
      <WindowTitle>Autodesk Revit 2024 - ON0126_9 - Section: Section 3</WindowTitle>
      <TitleTools>
        <Icon name="caretLeft" size={7} />
        <ToolButton aria-label="Find"><Icon name="binoculars" /></ToolButton>
        <SignIn><Icon name="user" />Sign In</SignIn>
        <Icon name="caret" size={6} />
        <ToolButton aria-label="Store"><Icon name="cart" /></ToolButton>
        <Divider />
        <ToolButton aria-label="Help"><Icon name="help" /></ToolButton>
        <Icon name="caret" size={6} />
        <WindowButtons>
          <ToolButton aria-label="Minimize" $w={14}><Icon name="min" size={10} /></ToolButton>
          <ToolButton aria-label="Restore" $w={14}><Icon name="restore" size={9} /></ToolButton>
          <ToolButton aria-label="Close" $w={14}><Icon name="close" size={10} /></ToolButton>
        </WindowButtons>
      </TitleTools>
    </TitleBar>
    <Tabs>
      {tabs.map((name) => (
        <TabButton key={name} $kind={name === 'File' ? 'file' : name === 'Manage' ? 'active' : undefined}>
          {name}
        </TabButton>
      ))}
      <ToolButton aria-label="Ribbon display" $w={42}>
        <Icon name="pill" size={11} />
        <Icon name="caret" size={6} />
      </ToolButton>
    </Tabs>
  </>
);

const ManageRibbon = () => (
  <Ribbon>
    <Panel share={39} label="Select" menu>
      <Large icon="modify" label="Modify" pressed />
    </Panel>
    <Panel share={556} label="Settings">
      <Large icon="materials" label="Materials" share={40} />
      <Stack $share={90}>
        <Small icon="objectStyles" label="Object Styles" />
        <Small icon="snaps" label="Snaps" />
        <Small icon="projectInfo" label="Project Information" />
      </Stack>
      <Large icon="service" label={'Parameters\nService'} share={44} />
      <Stack $share={91}>
        <Small icon="projectParams" label="Project Parameters" />
        <Small icon="sharedParams" label="Shared Parameters" />
        <Small icon="globalParams" label="Global Parameters" />
      </Stack>
      <Stack $share={115}>
        <Small icon="transfer" label="Transfer Project Standards" />
        <Small icon="purge" label="Purge Unused" />
        <Small icon="units" label="Project Units" />
      </Stack>
      <Stack $share={125} $line>
        <Small icon="structural" label="Structural Settings" menu />
        <Small icon="mep" label="MEP Settings" menu />
        <Small icon="panelSchedule" label="Panel Schedule Templates" menu />
      </Stack>
      <Large icon="wrench" label={'Additional\nSettings'} share={51} />
    </Panel>
    <Panel share={64} label="Project Location">
      <Stack>
        <IconOnly icon="location" />
        <IconOnly icon="coords" menu />
        <IconOnly icon="position" menu />
      </Stack>
    </Panel>
    <Panel share={138} label="Design Options">
      <Large icon="options" label={'Design\nOptions'} />
      <Stack>
        <Small icon="addSet" label="Add to Set" disabled />
        <Small icon="pickEdit" label="Pick to Edit" disabled />
        <SelectWrap>
          <OptionSelect disabled aria-label="Active design option"><option>Main Model</option></OptionSelect>
          <Icon name="caret" size={6} />
        </SelectWrap>
      </Stack>
    </Panel>
    <Panel share={72} label="Generative Design">
      <Large icon="study" label={'Create\nStudy'} />
      <Large icon="explore" label={'Explore\nOutcomes'} />
    </Panel>
    <Panel share={64} label="Manage Project">
      <Large icon="links" label={'Manage\nLinks'} />
      <Stack>
        <IconOnly icon="projectA" />
        <IconOnly icon="decal" />
      </Stack>
    </Panel>
    <Panel share={35} label="Phasing">
      <Large icon="phases" label="Phases" />
    </Panel>
    <Panel share={38} label="Selection">
      <Stack>
        <IconOnly icon="selSave" />
        <IconOnly icon="selLoad" />
        <IconOnly icon="selEdit" />
      </Stack>
    </Panel>
    <Panel share={33} label="Inquiry">
      <Stack>
        <IconOnly icon="ids" />
        <IconOnly icon="idSelect" />
        <IconOnly icon="warnings" />
      </Stack>
    </Panel>
    <Panel share={34} label="Macros">
      <Stack $center>
        <IconOnly icon="macro" />
        <IconOnly icon="macroSec" />
      </Stack>
    </Panel>
    <Panel share={79} label="Visual Programming">
      <Large icon="dynamo" label="Dynamo" />
      <Large icon="player" label={'Dynamo\nPlayer'} />
    </Panel>
  </Ribbon>
);

const PropertyValue = ({ label, value, kind }) => {
  if (kind === 'button') return <CellButton>{value}</CellButton>;
  if (kind === 'check') return <Check type="checkbox" aria-label={label} defaultChecked={value} />;
  return value;
};

const PropertiesPanel = () => (
  <Dock $bg="#f3f3f4">
    <DockHeader>Properties<ToolButton aria-label="Close properties" $w={9}><Icon name="close" size={7} /></ToolButton></DockHeader>
    <TypePicker>
      <TypeThumb><BigIcon name="sectionType" size={20} /></TypeThumb>
      <span>Section<br />Building Section</span>
      <Icon name="caret" size={7} />
    </TypePicker>
    <InstanceRow>
      <InstanceSelect aria-label="Instance"><option>Section: Section 3</option></InstanceSelect>
      <Chevron><Icon name="chevDown" size={7} /></Chevron>
      <EditTypeButton><Icon name="editType" size={9} />Edit Type</EditTypeButton>
    </InstanceRow>
    <PropsArea>
      <PropTable>
        <colgroup><col width="94" /><col width="92" /><col /></colgroup>
        <tbody>
          {properties.map(([label, value, kind]) => (
            value === undefined ? (
              <GroupRow key={label}>
                <th colSpan={3} scope="colgroup"><Icon name="collapse" size={6} />{label}</th>
              </GroupRow>
            ) : (
              <PropRow key={label} $dim={kind === 'dim'}>
                <th scope="row">{label}</th>
                <td><PropertyValue label={label} value={value} kind={kind} /></td>
                <td>{kind === 'more' && <MiniButton aria-label={`More for ${label}`} />}</td>
              </PropRow>
            )
          ))}
        </tbody>
      </PropTable>
      <ScrollBar>
        <Icon name="chevUp" size={10} />
        <ScrollTrack $from={34} $len="92%" />
        <Icon name="chevDown" size={10} />
      </ScrollBar>
    </PropsArea>
    <DockFooter>
      <a href="#help">Properties help</a>
      <ApplyButton disabled>Apply</ApplyButton>
    </DockFooter>
  </Dock>
);

const ProjectBrowser = () => (
  <Dock>
    <DockHeader>Project Browser - ON0126_9<ToolButton aria-label="Close browser" $w={12}><Icon name="close" size={7} /></ToolButton></DockHeader>
    <SearchBox>
      <Icon name="search" size={11} />
      <input type="text" placeholder="Search" aria-label="Search project" />
    </SearchBox>
    <TreeArea>
      <Tree>
        {tree.map(({ name, guides, folder, bold, hover }, i) => (
          <TreeRow key={i} $bold={bold} $hover={hover}>
            {guides.map((on, j) => <Guide key={j} $on={on} />)}
            {folder ? <Toggle aria-label={`Collapse ${name}`} /> : <><Guide $on $wide /><Icon name="sheet" size={12} /></>}
            <TreeLabel>{name}</TreeLabel>
          </TreeRow>
        ))}
      </Tree>
      <ScrollBar $w={10}>
        <Icon name="chevUp" size={9} />
        <ScrollTrack $from={56} $len="88px" />
        <Icon name="chevDown" size={9} />
      </ScrollBar>
    </TreeArea>
  </Dock>
);

const SectionDrawing = () => (
  <Drawing viewBox="480 138 721 526" preserveAspectRatio="xMidYMid slice">
    <path d="M742 150H944V139" fill="none" stroke="#c6c8ca" strokeWidth="1.500" />
    <path d="M723.500 139h18.500v14h-18.500z" fill="#0038b8" />

    {/* concrete outline */}
    <g fill="none" stroke="#000">
      <path d="M480 213H1201M480 462H1201" strokeWidth="3.600" />
      <path d="M480 263H533M600 263H665M732 263H797M863 263H929M995 263H1050M1133 263H1199" strokeWidth="5.500" strokeLinecap="round" />
      <path d="M1050 213V264M1133 213V264" strokeWidth="5" />
      <path d="M1050 262V379H1133.500V262" strokeWidth="3.600" strokeLinejoin="round" />
    </g>

    {/* stirrups */}
    <path d="M951 231V445M1031 231V445M1111.500 231V445" stroke="#0ff" strokeWidth="7.500" />

    {/* main bars */}
    <path d="M480 230H1201M480 446.500H1201" stroke="#f0f" strokeWidth="7.500" />
    {[951, 1031, 1111.5].map((x) => (
      <g key={x} fill="#f0f">
        <circle cx={x} cy="223" r="5" />
        <circle cx={x} cy="452.500" r="5" />
      </g>
    ))}

    <path d="M733 485v12l3-2.500 2 4 2-1-2-4h4z" fill="#d6189c" stroke="#4a1238" strokeWidth="0.800" />

    <path d="M742 535H944V604H742" fill="none" stroke="#c6cad2" strokeWidth="1.500" />
    <path d="M724.500 533.500h17v73h-17z" fill="#000" stroke="#0c1f5c" strokeWidth="2" />
    <text x="742" y="589" fontFamily="'Liberation Sans', Arial, sans-serif" fontSize="59" fill="#0a1450">D2Y1-4</text>
  </Drawing>
);

const ViewArea = () => (
  <ViewColumn>
    <ViewTabs>
      <ViewTab $active><Icon name="section" size={10} /><span>Section 3</span><Icon name="close" size={8} /></ViewTab>
      <ViewTab><Icon name="detailView" /><span>D2Y1-2</span></ViewTab>
      <ViewTab><Icon name="house" size={12} color="#999" /><span>DẦM D2Y1_3D</span></ViewTab>
      <ViewTabsMenu aria-label="Tab list"><Icon name="caret" size={8} /></ViewTabsMenu>
    </ViewTabs>
    <ViewBody>
      <Canvas>
        <SectionDrawing />
        <NavBar>
          <NavCorner><Icon name="ring" size={6} /></NavCorner>
          <ToolButton aria-label="Steering wheel"><Icon name="wheel" size={16} /></ToolButton>
          <Icon name="caret" size={5} />
          <ToolButton aria-label="Zoom region"><Icon name="zoomRegion" size={12} /></ToolButton>
          <Icon name="caret" size={5} />
          <NavCorner><Icon name="ring" size={6} /></NavCorner>
        </NavBar>
      </Canvas>
      <ScrollBar>
        <Icon name="chevUp" size={10} />
        <ScrollTrack $from={249} $len="10px" />
        <Icon name="chevDown" size={10} />
      </ScrollBar>
    </ViewBody>
    <ViewControls>
      <ScaleButton>1 : 50</ScaleButton>
      {viewTools.map((name) => (
        <ToolButton key={name} aria-label={name} $w={17}><Icon name={name} /></ToolButton>
      ))}
      <HorizontalScroll>
        <Icon name="chevLeft" size={9} />
        <Thumb />
        <Icon name="chevRight" size={9} />
      </HorizontalScroll>
      <Icon name="grip" size={11} />
    </ViewControls>
  </ViewColumn>
);

const Status = () => (
  <StatusBar>
    <StatusText>Views : Detail View : D2Y1-4</StatusText>
    <Icon name="worksets" size={12} />
    <StatusField $w={142}><Icon name="chevDown" size={7} color="#aaa" /></StatusField>
    <StatusField $w={32}>&nbsp;&nbsp;<Icon name="people" /><span>:0</span></StatusField>
    <ToolButton aria-label="Design options" $w={16}><Icon name="list" /></ToolButton>
    <ToolButton aria-label="Exclude options" $w={17}><Icon name="listDim" /></ToolButton>
    <StatusField $w={138}><span>&nbsp;Main Model</span><Icon name="chevDown" size={7} color="#aaa" /></StatusField>
    <StatusTools>
      {selectTools.map((name) => <Icon key={name} name={name} />)}
      <StatusField><Icon name="filter" />:0</StatusField>
    </StatusTools>
  </StatusBar>
);

const WindowsTaskbar = () => (
  <Taskbar>
    <TaskCenter>
      <TaskButton aria-label="Start"><TaskIcon name="start" /></TaskButton>
      <TaskSearch>
        <Icon name="search" size={11} />
        <input type="text" placeholder="Search" aria-label="Search Windows" />
        <Shell viewBox="0 0 48 26">{task.shell}</Shell>
      </TaskSearch>
      {apps.map((name) => (
        <TaskButton key={name} aria-label={name} $open={name === 'revitApp'}><TaskIcon name={name} /></TaskButton>
      ))}
    </TaskCenter>
    <Tray $pad={11}>
      <TaskIcon name="up" size={12} />
      <TaskIcon name="cloudOff" size={13} />
      <TaskIcon name="micLoc" size={14} />
      <TaskIcon name="keyboard" size={12} />
      <TaskIcon name="touchpad" size={12} />
      <span>ENG</span>
      <Tray as="span" $gap={4}>
        <TaskIcon name="wifi" size={12} />
        <TaskIcon name="volume" size={12} />
        <TaskIcon name="battery" size={14} />
      </Tray>
      <Clock>{'8:15 PM\n2/25/2026'}</Clock>
    </Tray>
  </Taskbar>
);

const App = () => (
  <>
    <GlobalStyle />
    <Desktop>
      <MeetingStrip>
        <MeetingTile />
        <MeetingTile $active />
        <MeetingTile />
        <MeetingTile />
        <MeetingTile />
        <MeetingTile />
      </MeetingStrip>
      <Window>
        <Header />
        <ManageRibbon />
        <OptionsBar />
        <Workspace>
          <PropertiesPanel />
          <ProjectBrowser />
          <ViewArea />
        </Workspace>
        <Status />
        <RedLine />
        <WindowsTaskbar />
      </Window>
    </Desktop>
  </>
);

export default App;
